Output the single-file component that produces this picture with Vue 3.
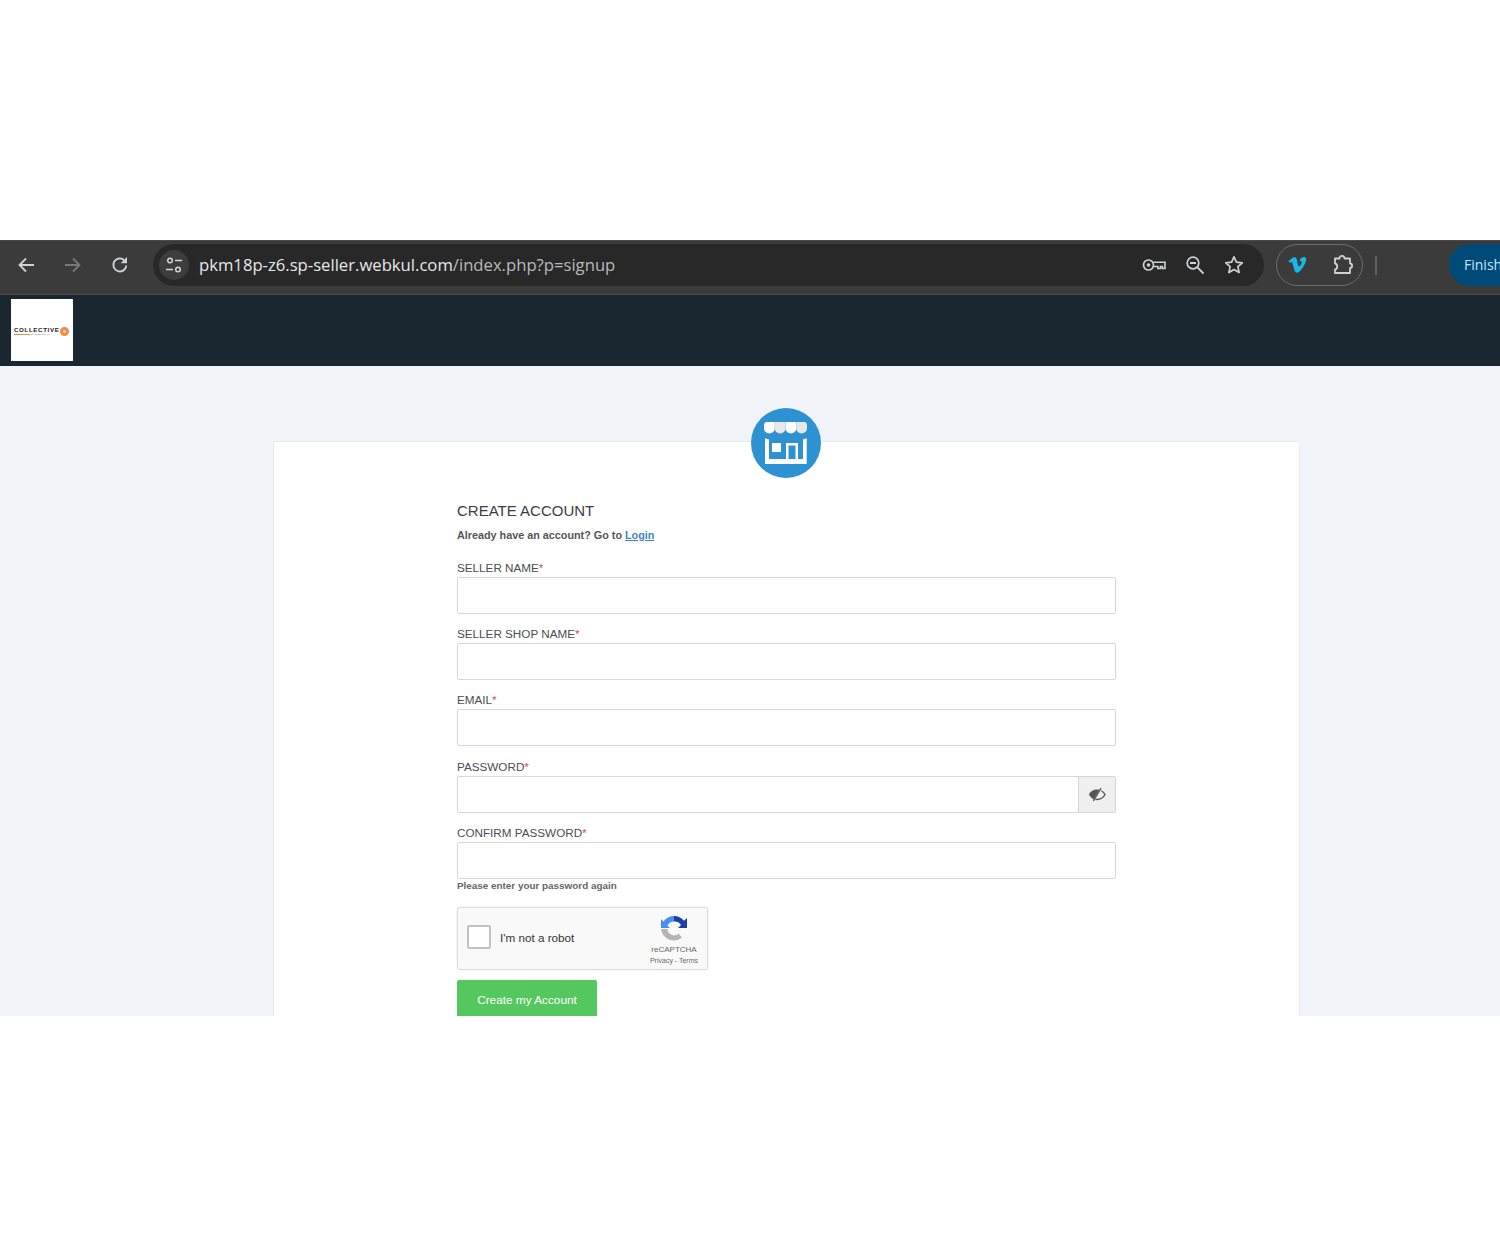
<template>
  <div class="shot">
    <div class="toolbar">
      <div class="nav-icons">
        <svg viewBox="0 0 20 20" width="20" height="20"><path d="M18 10H4M10 3.500 3.500 10l6.500 6.500" fill="none" stroke="#cfd1d3" stroke-width="1.800"/></svg>
        <svg viewBox="0 0 20 20" width="20" height="20"><path d="M2 10h14M10 3.500 16.500 10 10 16.500" fill="none" stroke="#77797b" stroke-width="1.800"/></svg>
        <svg viewBox="0 0 20 20" width="20" height="20"><path d="M16.300 10.500A6.500 6.500 0 1 1 14.300 5.200" fill="none" stroke="#cfd1d3" stroke-width="1.900"/><path d="M17 2v6.300h-6.300z" fill="#cfd1d3"/></svg>
      </div>
      <div class="omnibox">
        <div class="tune">
          <svg viewBox="0 0 20 20" width="20" height="20"><circle cx="6" cy="5.500" r="2.300" fill="none" stroke="#d5d6d8" stroke-width="1.500"/><path d="M11 5.500h7M2 14.500h7" stroke="#d5d6d8" stroke-width="1.500"/><circle cx="14" cy="14.500" r="2.300" fill="none" stroke="#d5d6d8" stroke-width="1.500"/></svg>
        </div>
        <div class="url"><span class="url-host">pkm18p-z6.sp-seller.webkul.com</span>/index.php?p=signup</div>
        <div class="omni-icons">
          <svg viewBox="0 0 24 16" width="24" height="16"><circle cx="6.500" cy="8" r="5" fill="none" stroke="#d0d1d3" stroke-width="1.700"/><circle cx="6.500" cy="8" r="1.800" fill="#d0d1d3"/><path d="M11.500 5.200H23V11.500h-2.600V9.500h-2v2h-2.600v-2h-4.300" fill="none" stroke="#d0d1d3" stroke-width="1.600"/></svg>
          <svg viewBox="0 0 20 20" width="20" height="20"><circle cx="8" cy="8" r="5.800" fill="none" stroke="#d0d1d3" stroke-width="1.700"/><path d="M5 8h6M12.200 12.200 18.500 18.500" stroke="#d0d1d3" stroke-width="1.800"/></svg>
          <svg viewBox="0 0 20 20" width="20" height="20"><path d="m10 1.800 2.400 5.400 5.900.600-4.400 3.900 1.200 5.800L10 14.600l-5.100 2.900 1.200-5.800-4.400-3.900 5.900-.600z" fill="none" stroke="#d0d1d3" stroke-width="1.700" stroke-linejoin="round"/></svg>
        </div>
      </div>
      <div class="ext-pill">
        <svg viewBox="0 0 24 22" width="20" height="18"><path d="M1.500 6.500C4.500 4 7 1.500 9 1.500c2.500 0 3 2.500 3.500 6 .4 2.800 1 5 1.900 5 1.200 0 3.400-3.200 3.400-5 0-1.500-1.200-1.900-3-1C16 2.500 19 .8 21.200 1.300c2 .5 2.400 2.500 1.800 4.700-1.200 4.500-7.200 14.500-11 14.500-3.500 0-4.500-11-6.300-13-.7-.5-2.400.8-2.400.8z" fill="#1ab7ea"/></svg>
        <svg viewBox="0 0 22 22" width="22" height="22"><path d="M3 4.500h4.500C7.500 1 12.500 1 12.500 4.500H18v5c2.800 0 2.800 4.500 0 4.500v5H3v-3.500c3-.5 3-5.500 0-6z" fill="none" stroke="#d0d1d3" stroke-width="1.800" stroke-linejoin="round"/></svg>
      </div>
      <div class="tb-sep"></div>
      <div class="finish">Finish</div>
    </div>

    <header class="site-nav">
      <div class="logo">
        <div class="logo-mark">
          <div>
            <div class="logo-word">COLLECTIVE</div>
            <div class="logo-line"><i></i><span>MARKET CRAFT</span></div>
          </div>
          <div class="logo-dot"></div>
        </div>
      </div>
    </header>

    <main class="content">
      <div class="card">
        <div class="shop-badge">
          <svg viewBox="0 0 70 70" width="70" height="70">
            <path d="M16 14h7.750v6.500a5.375 5 0 0 1-10.750 0V17a3 3 0 0 1 3-3z" fill="#fff"/>
            <path d="M23.750 14H34.500v6.500a5.375 5 0 0 1-10.750 0z" fill="#e8e8e8"/>
            <path d="M34.500 14h10.750v6.500a5.375 5 0 0 1-10.750 0z" fill="#fff"/>
            <path d="M45.250 14H53a3 3 0 0 1 3 3v3.500a5.375 5 0 0 1-10.750 0z" fill="#e8e8e8"/>
            <path d="M14 30c1 .8 2.500 1.300 4 1.300V51h34V31.300c1.200 0 2.700-.4 3.700-1.300v26H14z" fill="#fff"/>
            <path d="M21 35h9v9h-9zM35 35h12v16h-2.500V37.500h-7V51H35z" fill="#fff"/>
          </svg>
        </div>
        <form class="signup" @submit.prevent>
          <h1>CREATE ACCOUNT</h1>
          <p class="have-account">Already have an account? Go to <a href="#">Login</a></p>

          <div v-for="f in fields" :key="f.label" class="field">
            <label>{{ f.label }}<span class="req">*</span></label>
            <div class="input-row">
              <input type="text" />
              <span v-if="f.eye" class="addon">
                <svg viewBox="0 0 20 16" width="18" height="15">
                  <path d="M1 8c2-3.500 5-5.500 9-5.500.9 0 1.800.100 2.600.300L6.500 13.200C4 12.300 2.300 10.400 1 8z" fill="#555"/>
                  <path d="M14.800 3.800C16.600 4.800 18 6.200 19 8c-2 3.500-5 5.500-9 5.500-.6 0-1.100 0-1.700-.100" fill="none" stroke="#555" stroke-width="1.500"/>
                  <path d="M14.500 1 6 15" stroke="#555" stroke-width="1.500"/>
                </svg>
              </span>
            </div>
            <small v-if="f.hint">{{ f.hint }}</small>
          </div>

          <div class="captcha">
            <span class="captcha-box"></span>
            <span class="captcha-text">I'm not a robot</span>
            <div class="captcha-brand">
              <svg viewBox="0 0 26 26" width="26" height="26">
                <path d="M0 13h6.500a6.500 6.500 0 0 0 11 4.500l3.500 4A13 13 0 0 1 0 13z" fill="#b5b5b5"/>
                <path d="M13 0A13 13 0 0 0 2.500 5.500L0 3v9h9L6.500 9.500A7.500 7.500 0 0 1 13 5.500z" fill="#4a90f0"/>
                <path d="M13 0a13 13 0 0 1 10 4.700L26 2v10h-9l3-3a7 7 0 0 0-7-3.500z" fill="#1a3fa8"/>
              </svg>
              <div class="cap-name">reCAPTCHA</div>
              <div class="cap-links">Privacy - Terms</div>
            </div>
          </div>

          <button type="button" class="submit">Create my Account</button>
        </form>
      </div>
    </main>
  </div>
</template>

<script setup>
const fields = [
  { label: 'SELLER NAME' },
  { label: 'SELLER SHOP NAME' },
  { label: 'EMAIL' },
  { label: 'PASSWORD', eye: true },
  { label: 'CONFIRM PASSWORD', hint: 'Please enter your password again' }
]
</script>

<style>
html, body {
  background: #fff;
}
</style>

<style scoped>
.shot {
  width: 1500px;
  height: 1257px;
  padding-top: 240px;
  box-sizing: border-box;
  overflow: hidden;
  font-family: "Liberation Sans", Arial, sans-serif;
  background: #fff;
}

.toolbar {
  height: 55px;
  box-sizing: border-box;
  background: #3b3b3b;
  border-top: 1px solid #4a4a4a;
  border-bottom: 1px solid #4c4c4c;
  display: flex;
  align-items: center;
  padding: 0 0 5px 16px;
  overflow: hidden;
}

.nav-icons {
  display: flex;
  gap: 27px;
  width: 137px;
  flex: none;
}

.nav-icons svg {
  flex: none;
}

.omnibox {
  width: 1111px;
  height: 42px;
  flex: none;
  border-radius: 21px;
  background: #282828;
  display: flex;
  align-items: center;
  padding: 0 20px 0 6px;
  box-sizing: border-box;
}

.tune {
  width: 30px;
  height: 30px;
  border-radius: 50%;
  background: #3d3d3d;
  display: flex;
  align-items: center;
  justify-content: center;
  flex: none;
}

.url {
  margin: 0 0 2px 10px;
  font-family: "Open Sans", sans-serif;
  font-size: 16.660px;
  color: #b9babc;
  flex: 1;
  white-space: nowrap;
}

.url-host {
  color: #e6e7e9;
}

.omni-icons {
  display: flex;
  align-items: center;
  gap: 19px;
}

.ext-pill {
  margin-left: 12px;
  width: 87px;
  height: 42px;
  flex: none;
  box-sizing: border-box;
  border: 1.5px solid #6d6d6d;
  border-radius: 21px;
  display: flex;
  align-items: center;
  justify-content: space-between;
  padding: 0 8px 0 10px;
}

.tb-sep {
  width: 2px;
  height: 19px;
  background: #5f5f5f;
  margin-left: 12px;
  flex: none;
}

.finish {
  margin-left: 72px;
  width: 80px;
  height: 42px;
  flex: none;
  background: #004a77;
  border-radius: 21px 0 0 21px;
  color: #c2e7ff;
  font-family: "Open Sans", sans-serif;
  font-size: 14px;
  line-height: 42px;
  padding-left: 15px;
  box-sizing: border-box;
  white-space: nowrap;
}

.site-nav {
  height: 71px;
  background: #1a2730;
  padding: 4px 0 0 11px;
  box-sizing: border-box;
}

.logo {
  width: 62px;
  height: 62px;
  background: #fff;
  display: flex;
  align-items: center;
  justify-content: flex-start;
  padding-left: 3px;
  box-sizing: border-box;
}

.logo-mark {
  display: flex;
  align-items: center;
  gap: 1px;
  margin-top: 3px;
}

.logo-word {
  font-size: 6.200px;
  font-weight: 700;
  color: #222;
  letter-spacing: .62px;
  line-height: 6px;
  white-space: nowrap;
}

.logo-line {
  display: flex;
  align-items: center;
  gap: 1px;
  height: 4px;
  font-size: 2.500px;
  color: #777;
  white-space: nowrap;
}

.logo-line i {
  width: 16px;
  height: 1.500px;
  background: #f58a42;
}

.logo-dot {
  width: 9px;
  height: 9px;
  box-sizing: border-box;
  border-radius: 50%;
  border: 3px solid #f58a42;
  background: #f9d5b8;
}

.content {
  height: 650px;
  background: #f0f3f8;
  padding: 75px 200px 0 273px;
  box-sizing: border-box;
  overflow: hidden;
}

.card {
  position: relative;
  height: 700px;
  background: #fff;
  border: 1px solid #e8eaee;
  border-radius: 3px;
  box-sizing: border-box;
  padding: 51px 183px 0;
}

.shop-badge {
  position: absolute;
  left: 477px;
  top: -34px;
  width: 70px;
  height: 70px;
  border-radius: 50%;
  background: #2e91d1;
}

.shop-badge svg {
  display: block;
}

h1 {
  margin: 0;
  font-size: 15px;
  font-weight: 400;
  line-height: 36px;
  color: #3a3d42;
}

.have-account {
  margin: -2px 0 16.500px;
  font-size: 10.800px;
  font-weight: 700;
  line-height: 16px;
  color: #555;
}

.have-account a {
  color: #3b87c4;
}

.field {
  margin-bottom: 12.400px;
}

.field:last-of-type {
  margin-bottom: 0;
}

.field label {
  display: block;
  font-size: 11.700px;
  line-height: 15px;
  padding-bottom: 2px;
  color: #4a4d52;
}

.req {
  color: #c0504d;
}

.input-row {
  display: flex;
  height: 37px;
}

.input-row input {
  flex: 1;
  min-width: 0;
  height: 37px;
  box-sizing: border-box;
  margin: 0;
  padding: 0 10px;
  border: 1px solid #d4d6da;
  border-radius: 2px;
  background: #fff;
  outline: none;
}

.addon {
  width: 38px;
  height: 37px;
  box-sizing: border-box;
  margin-left: -1px;
  flex: none;
  background: #efefef;
  border: 1px solid #d4d6da;
  border-radius: 0 2px 2px 0;
  display: flex;
  align-items: center;
  justify-content: center;
}

.field small {
  display: block;
  font-size: 9.900px;
  font-weight: 700;
  line-height: 14px;
  color: #666;
}

.captcha {
  width: 251px;
  height: 62.500px;
  box-sizing: border-box;
  margin-top: 14px;
  background: #f9f9f9;
  border: 1px solid #dcdcdc;
  border-radius: 3px;
  box-shadow: 0 0 3px rgba(0, 0, 0, .08);
  display: flex;
  align-items: flex-start;
  padding-left: 9px;
}

.captcha-box {
  width: 24px;
  height: 24px;
  margin-top: 17px;
  box-sizing: border-box;
  background: #fff;
  border: 2px solid #c1c1c1;
  border-radius: 2px;
  flex: none;
}

.captcha-text {
  margin: 23px 0 0 9px;
  font-size: 11.700px;
  line-height: 14px;
  color: #333;
  white-space: nowrap;
}

.captcha-brand {
  margin-left: auto;
  width: 60px;
  margin-right: 3px;
  text-align: center;
  color: #666;
  padding-top: 8px;
}

.captcha-brand svg {
  display: block;
  margin: 0 auto;
}

.cap-name {
  font-size: 8px;
  line-height: 11px;
  margin-top: 2px;
}

.cap-links {
  font-size: 7px;
  line-height: 9px;
  margin-top: 1px;
  white-space: nowrap;
}

.submit {
  display: block;
  margin-top: 10px;
  width: 140px;
  height: 42px;
  border: none;
  border-radius: 2px;
  background: #55c75f;
  color: #fff;
  font-family: "Liberation Sans", Arial, sans-serif;
  font-size: 11.800px;
  padding: 0 0 2px;
  line-height: 40px;
}
</style>
